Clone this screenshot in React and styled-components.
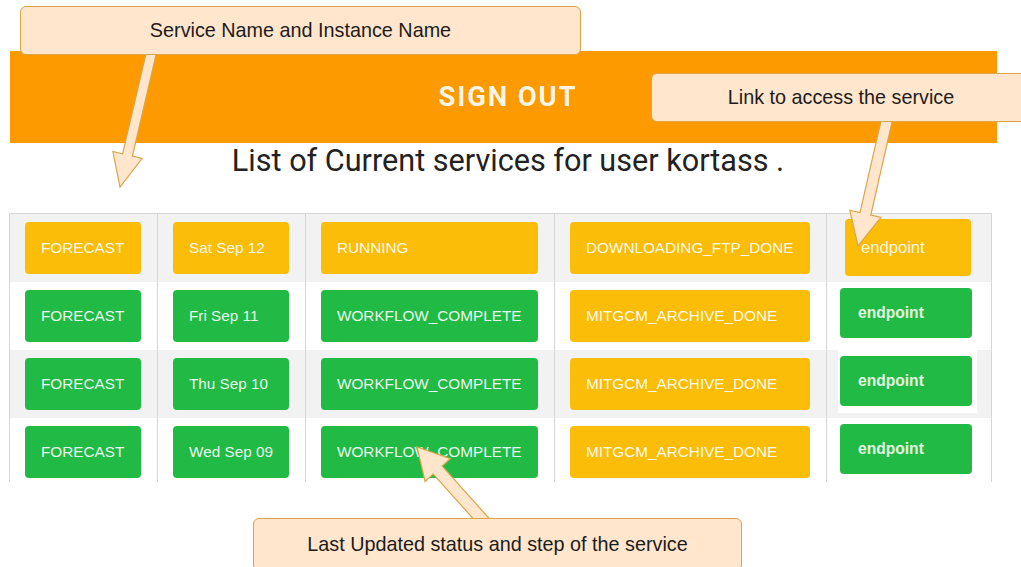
import React from 'react';
import styled, { createGlobalStyle } from 'styled-components';

const GlobalStyle = createGlobalStyle`
    html, body {
        margin: 0;
        padding: 0;
        background: #ffffff;
        overflow: hidden;
    }
    * {
        box-sizing: border-box;
    }
`

const YELLOW = '#fbbd08';
const GREEN = '#21ba45';

const Page = styled.div`
    position: relative;
    width: 1021px;
    height: 567px;
    padding: 51px 0 0 9px;
    font-family: 'Liberation Sans', Arial, sans-serif;
    overflow: hidden;
`

const TopBar = styled.div`
    width: 987px;
    height: 92px;
    margin-left: 1px;
    background: #fc9a00;
    display: flex;
    align-items: center;
    justify-content: center;
    padding-left: 9px;
`

const SignOut = styled.span`
    font-family: Roboto, 'Noto Sans', sans-serif;
    font-weight: 700;
    font-size: 27.4px;
    letter-spacing: 1.9px;
    color: rgba(255, 255, 255, 0.93);
`

const Title = styled.h1`
    margin: 0 0 34px;
    width: 998px;
    height: 36px;
    line-height: 36px;
    text-align: center;
    font-family: Roboto, 'Noto Sans', sans-serif;
    font-weight: 400;
    font-size: 30.6px;
    color: #222222;
`

const Table = styled.div`
    width: 983px;
    height: 269px;
    overflow: hidden;
    border: 1px solid #d6d6d6;
    border-bottom: none;
`

const Row = styled.div`
    display: grid;
    grid-template-columns: 147px 148px 249px 272px 1fr;
    height: 68px;
    background: ${({ $striped }) => ($striped ? '#f2f2f2' : '#ffffff')};
`

const Cell = styled.div`
    padding: 8px 16px 8px 15px;
    border-left: ${({ $first }) => ($first ? 'none' : '1px solid #d6d6d6')};
`

const Badge = styled.div`
    height: 52px;
    display: flex;
    align-items: center;
    padding-left: 16px;
    border-radius: 4px;
    background: ${({ $color }) => $color};
    color: rgba(255, 255, 255, 0.93);
    font-size: 15.3px;
    white-space: nowrap;
`

const EndpointCell = styled.div`
    border-left: 1px solid #d6d6d6;
    padding: ${({ $pending }) => ($pending ? '5px 0 0 18px' : '6px 0 0 13px')};
`

// the third row's link sits on a white focus block
const EndpointWrap = styled.div`
    display: inline-block;
    margin: ${({ $lit }) => ($lit ? '-6px 0 0 -2px' : '0')};
    padding: ${({ $lit }) => ($lit ? '6px 5px 7px 2px' : '0')};
    background: ${({ $lit }) => ($lit ? '#ffffff' : 'transparent')};
`

const Endpoint = styled.a`
    display: flex;
    align-items: center;
    width: ${({ $pending }) => ($pending ? '126px' : '132px')};
    height: ${({ $pending }) => ($pending ? '57px' : '50px')};
    padding-left: ${({ $pending }) => ($pending ? '16px' : '18px')};
    border-radius: 4px;
    background: ${({ $pending }) => ($pending ? YELLOW : GREEN)};
    color: ${({ $pending }) => ($pending ? 'rgba(255,255,255,0.9)' : '#e2f6df')};
    font-size: ${({ $pending }) => ($pending ? '16.6px' : '15.6px')};
    font-weight: ${({ $pending }) => ($pending ? 400 : 700)};
    text-decoration: none;
    cursor: pointer;
`

/* annotation layer drawn over the page */
const Arrows = styled.svg`
    position: absolute;
    left: 0;
    top: 0;
    width: 1021px;
    height: 567px;
    pointer-events: none;
`

const Callout = styled.div`
    position: absolute;
    left: ${({ $x }) => $x}px;
    top: ${({ $y }) => $y}px;
    width: ${({ $w }) => $w}px;
    height: ${({ $h }) => $h}px;
    display: flex;
    align-items: center;
    justify-content: center;
    background: #ffe6cc;
    border: 1px solid #dba54a;
    border-radius: 6px;
    font-size: 19.8px;
    color: #1c1c1c;
    white-space: nowrap;
`

const services = [
    { name: 'FORECAST', date: 'Sat Sep 12', status: 'RUNNING', step: 'DOWNLOADING_FTP_DONE', pending: true },
    { name: 'FORECAST', date: 'Fri Sep 11', status: 'WORKFLOW_COMPLETE', step: 'MITGCM_ARCHIVE_DONE' },
    { name: 'FORECAST', date: 'Thu Sep 10', status: 'WORKFLOW_COMPLETE', step: 'MITGCM_ARCHIVE_DONE', lit: true },
    { name: 'FORECAST', date: 'Wed Sep 09', status: 'WORKFLOW_COMPLETE', step: 'MITGCM_ARCHIVE_DONE' },
];

const arrowPaths = [
    '147.1,48.9 122.6,153.8 112.9,151.5 120,187 142.1,158.3 132.4,156.0 156.9,51.1',
    '882.6,113.8 860.0,212.6 849.8,210.2 858,246 881.0,217.4 870.8,215.0 893.4,116.2',
    '491.5,521.0 442.2,466.1 450.3,458.7 417,447 425.1,481.5 433.2,474.1 482.5,529.0',
];

const App = () => {
    return (
        <>
            <GlobalStyle />
            <Page>
                <TopBar>
                    <SignOut>SIGN OUT</SignOut>
                </TopBar>
                <Title>List of Current services for user kortass .</Title>
                <Table>
                    {services.map((s, index) => {
                        const main = s.pending ? YELLOW : GREEN;
                        return (
                            <Row key={index} $striped={index % 2 === 0}>
                                <Cell $first>
                                    <Badge $color={main}>{s.name}</Badge>
                                </Cell>
                                <Cell>
                                    <Badge $color={main}>{s.date}</Badge>
                                </Cell>
                                <Cell>
                                    <Badge $color={main}>{s.status}</Badge>
                                </Cell>
                                <Cell>
                                    <Badge $color={YELLOW}>{s.step}</Badge>
                                </Cell>
                                <EndpointCell $pending={s.pending}>
                                    <EndpointWrap $lit={s.lit}>
                                        <Endpoint $pending={s.pending}>endpoint</Endpoint>
                                    </EndpointWrap>
                                </EndpointCell>
                            </Row>
                        );
                    })}
                </Table>

                <Arrows viewBox="0 0 1021 567">
                    {arrowPaths.map((points, index) => (
                        <polygon
                        key={index}
                        points={points}
                        fill="#ffe6cc"
                        stroke="#dba54a"
                        strokeWidth="1.2"
                        strokeLinejoin="miter"
                        />
                    ))}
                </Arrows>
                <Callout $x={20} $y={6} $w={561} $h={49}>Service Name and Instance Name</Callout>
                <Callout $x={651} $y={73} $w={380} $h={49}>Link to access the service</Callout>
                <Callout $x={253} $y={518} $w={489} $h={53}>Last Updated status and step of the service</Callout>
            </Page>
        </>
    )
}

export default App
